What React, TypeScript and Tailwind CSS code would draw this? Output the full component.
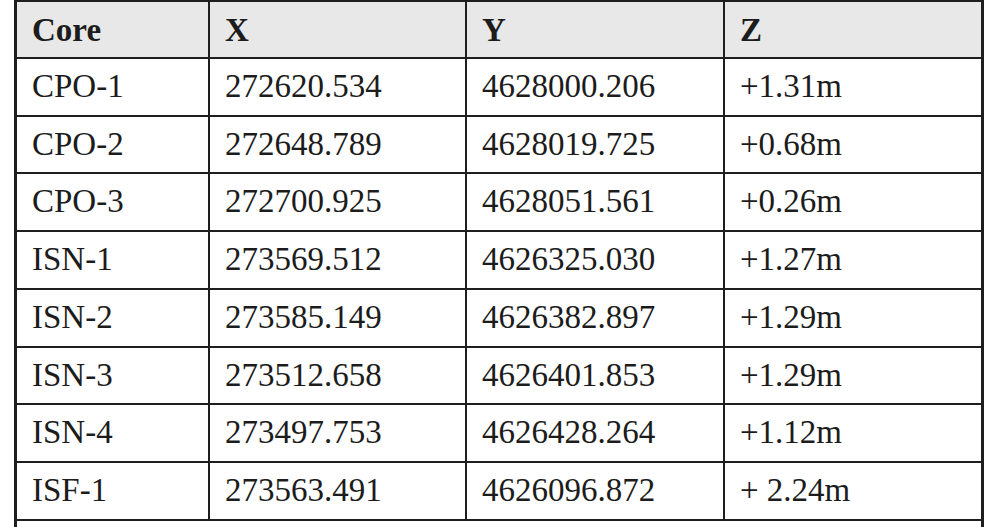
const rows = [
  { core: 'CPO-1', x: '272620.534', y: '4628000.206', z: '+1.31m', h: 'h-[58px]' },
  { core: 'CPO-2', x: '272648.789', y: '4628019.725', z: '+0.68m', h: 'h-[57px]' },
  { core: 'CPO-3', x: '272700.925', y: '4628051.561', z: '+0.26m', h: 'h-[58px]' },
  { core: 'ISN-1', x: '273569.512', y: '4626325.030', z: '+1.27m', h: 'h-[58px]' },
  { core: 'ISN-2', x: '273585.149', y: '4626382.897', z: '+1.29m', h: 'h-[58px]' },
  { core: 'ISN-3', x: '273512.658', y: '4626401.853', z: '+1.29m', h: 'h-[57px]' },
  { core: 'ISN-4', x: '273497.753', y: '4626428.264', z: '+1.12m', h: 'h-[58px]' },
  { core: 'ISF-1', x: '273563.491', y: '4626096.872', z: '+ 2.24m', h: 'h-[58px]' },
]

const grid = 'grid grid-cols-[193px_257px_258px_1fr] border-b-2 border-[#1e1e1e]'
const cell = 'flex items-center pl-[15px] border-r-2 border-[#1e1e1e]'

export default function App() {
  return (
    <div className="h-screen overflow-hidden bg-white" style={{ fontFamily: '"Liberation Serif", serif' }}>
      <div className="ml-[14px] w-[970px] border-x-[3px] border-t-2 border-[#1e1e1e] text-[33px] text-[#1c1c1c]">
        {/* header */}
        <div className={`${grid} h-[57px] bg-[#e8e8e8] font-bold`}>
          <div className={`${cell} pt-[3px]`}>Core</div>
          <div className={`${cell} pt-[3px]`}>X</div>
          <div className={`${cell} pt-[3px]`}>Y</div>
          <div className="flex items-center pl-[15px] pt-[3px]">Z</div>
        </div>

        {rows.map((r) => (
          <div key={r.core} className={`${grid} ${r.h}`}>
            <div className={cell}>{r.core}</div>
            <div className={cell}>{r.x}</div>
            <div className={cell}>{r.y}</div>
            <div className="flex items-center pl-[15px]">{r.z}</div>
          </div>
        ))}

        <div className="h-[40px]" />
      </div>
    </div>
  )
}
